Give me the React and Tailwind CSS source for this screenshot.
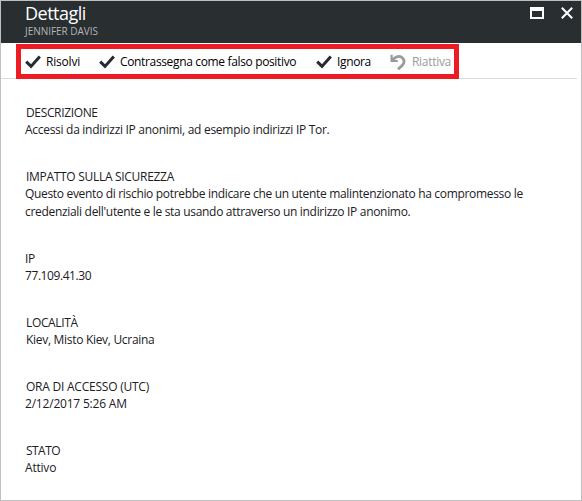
function Check() {
  return (
    <svg className="block h-[14px] w-4 shrink-0" viewBox="0 0 16 14" fill="none" stroke="#252b30" strokeWidth="3">
      <path d="M1.2 6.6L6 11.4L14.8 1.4" />
    </svg>
  );
}

function Undo() {
  return (
    <svg className="block h-4 w-4 shrink-0" viewBox="0 0 16 16" fill="none" stroke="#999b9d">
      <path d="M1.6 0.8V7H7.8" strokeWidth="2.2" />
      <path d="M2.2 6.6C5 2.8 8.8 1.4 11.8 3.4C15 5.8 14.6 9.4 12 11.6L8 15.2" strokeWidth="2.8" />
    </svg>
  );
}

function Section({ label, labelClass = "", children }) {
  return (
    <section className="h-[64px]">
      <h2 className={`h-[17px] whitespace-nowrap leading-[17px] text-[#1c2024] ${labelClass}`}>{label}</h2>
      {children}
    </section>
  );
}

export default function App() {
  return (
    <div className="flex h-[501px] w-[582px] flex-col overflow-hidden border border-[#c0c0c0] bg-white font-['Open_Sans','Noto_Sans',sans-serif] text-[12px] text-[#1c2024]">
      <header className="flex h-[42px] shrink-0 justify-between bg-[#292e31] pl-6 pr-2">
        <div className="whitespace-nowrap">
          <h1 className="h-[23px] text-[18px] leading-[24px] tracking-[-0.5px] text-white">Dettagli</h1>
          <p className="text-[10px] leading-[15px] tracking-[-0.03px] text-[#b4b6b8]">JENNIFER DAVIS</p>
        </div>
        <div className="flex gap-[17px] pt-[6px]">
          <div className="h-3 w-[14px] border-2 border-t-4 border-white" />
          <svg className="h-3 w-3" viewBox="0 0 12 12" stroke="#fff" strokeWidth="2">
            <path d="M0.8 0.8L11.2 11.2M11.2 0.8L0.8 11.2" />
          </svg>
        </div>
      </header>
      <div className="mr-1 mt-px flex h-[35px] shrink-0 border-b border-[#dcdcdc] pl-[15px]">
        <div className="flex h-[35px] w-[443px] items-center border-[5px] border-[#ed1c24] bg-white pl-1 text-black">
          <div className="flex w-[74px] shrink-0 items-center gap-[5px] whitespace-nowrap">
            <Check />
            <span className="tracking-[-0.2px]">Risolvi</span>
          </div>
          <div className="flex w-[217px] shrink-0 items-center gap-[5px] whitespace-nowrap">
            <Check />
            <span className="tracking-[-0.35px]">Contrassegna come falso positivo</span>
          </div>
          <div className="flex w-[74px] shrink-0 items-center gap-[5px] whitespace-nowrap">
            <Check />
            <span className="tracking-[-0.35px]">Ignora</span>
          </div>
          <div className="flex items-center gap-[6px] whitespace-nowrap text-[#999b9d]">
            <Undo />
            <span className="tracking-[-0.3px]">Riattiva</span>
          </div>
        </div>
      </div>
      <main className="whitespace-nowrap pl-6 pt-[25px]">
        <Section label="DESCRIZIONE" labelClass="pl-px tracking-[-0.35px]">
          <p className="leading-[17px] tracking-[-0.29px]">Accessi da indirizzi IP anonimi, ad esempio indirizzi IP Tor.</p>
        </Section>
        <Section label="IMPATTO SULLA SICUREZZA" labelClass="pl-px tracking-[-0.3px]">
          <p className="leading-[18px] tracking-[-0.32px]">
            Questo evento di rischio potrebbe indicare che un utente malintenzionato ha compromesso le
          </p>
          <p className="leading-[18px] tracking-[-0.31px]">credenziali dell'utente e le sta usando attraverso un indirizzo IP anonimo.</p>
        </Section>
        <div className="h-[18px]" />
        <Section label="IP" labelClass="tracking-[-0.4px]">
          <p className="leading-[17px] tracking-[-0.42px]">77.109.41.30</p>
        </Section>
        <Section label="LOCALITÀ" labelClass="pl-px tracking-[-0.35px]">
          <p className="pl-px leading-[17px] tracking-[-0.3px]">Kiev, Misto Kiev, Ucraina</p>
        </Section>
        <Section label="ORA DI ACCESSO (UTC)" labelClass="pl-px tracking-[-0.23px]">
          <p className="leading-[17px] tracking-[-0.2px]">2/12/2017 5:26 AM</p>
        </Section>
        <Section label="STATO" labelClass="pl-px tracking-[-0.55px]">
          <p className="leading-[17px] tracking-[-0.2px]">Attivo</p>
        </Section>
      </main>
    </div>
  );
}
